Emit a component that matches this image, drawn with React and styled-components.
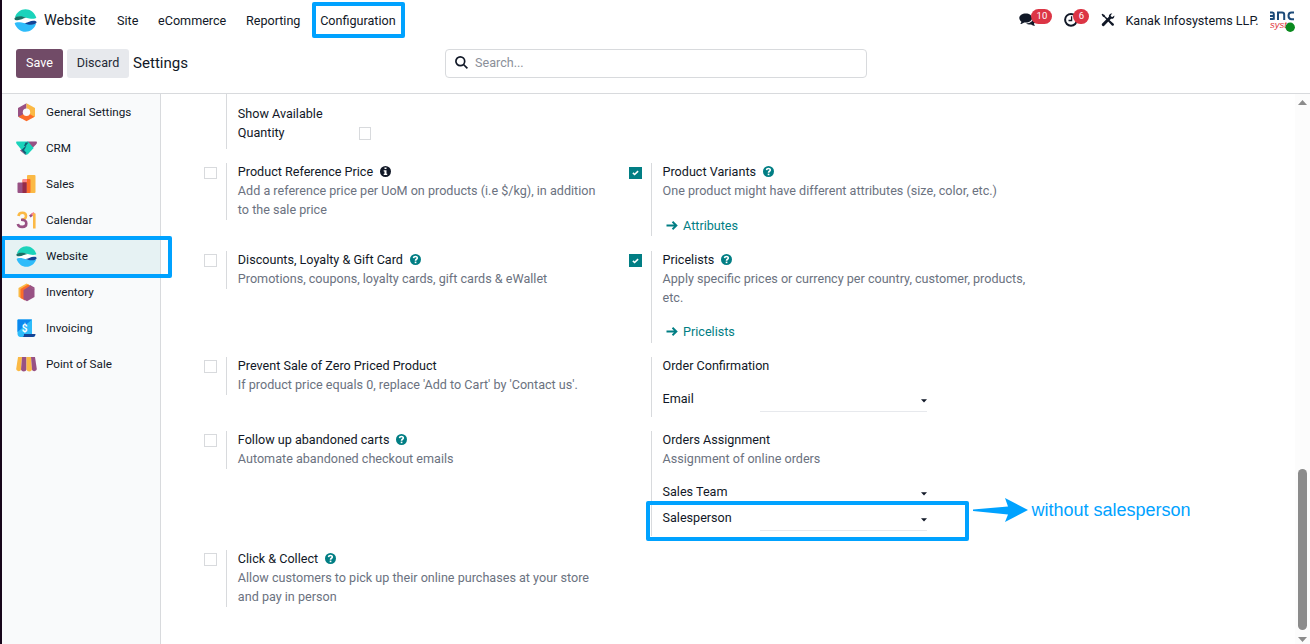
import React from "react";
import styled, { createGlobalStyle, css } from "styled-components";

const Global = createGlobalStyle`
  *, *::before, *::after { box-sizing: border-box; }
  body { margin: 0; background: #fff; overflow: hidden; }
  body, button, input { font-family: Roboto, "Liberation Sans", sans-serif; }
`;

const ink = "#111827";
const muted = "#6b7280";
const teal = "#017e84";
const line = "#d8dadd";
const mark = "#00a2ff";

const Page = styled.div`
  position: relative;
  display: flex;
  flex-direction: column;
  height: 644px;
  width: 1310px;
  border-left: 2px solid #17061a;
  overflow: hidden;
  color: ${ink};
  font-size: 12.6px;
  line-height: 19px;
`;

const Navbar = styled.header`
  display: flex;
  align-items: center;
  height: 41px;
  flex: none;
  padding: 0 15px 0 12px;
`;
const Brand = styled.div`
  display: flex;
  align-items: center;
  gap: 7px;
  width: 103px;
  font-size: 14.4px;
`;
const Menu = styled.nav`
  display: flex;
  gap: 19.7px;
  flex: 1;
`;
const MenuItem = styled.a`
  color: ${ink};
  white-space: nowrap;
`;
const Tray = styled.div`
  display: flex;
  align-items: center;
`;
const TrayIcon = styled.div`
  position: relative;
  width: ${(p) => p.$w}px;
  height: 20px;
  padding-top: ${(p) => p.$pad || 0}px;
  svg { display: block; }
`;
const Badge = styled.span`
  position: absolute;
  left: ${(p) => p.$x}px;
  top: -2px;
  width: ${(p) => p.$w}px;
  height: 15px;
  border-radius: 8px;
  background: #dc3545;
  color: #fff;
  font-size: 9.5px;
  line-height: 14px;
  text-align: center;
`;
const User = styled.span`
  white-space: nowrap;
  width: 144.6px;
`;

const ControlPanel = styled.div`
  display: flex;
  align-items: center;
  height: 53px;
  flex: none;
  padding: 0 14px 7px;
  border-bottom: 1px solid ${line};
`;
const Button = styled.button`
  height: 29px;
  width: ${(p) => p.$w}px;
  padding: 0 0 2px;
  margin-right: 4px;
  border: 0;
  border-radius: 3px;
  font-size: 12.6px;
  background: ${(p) => (p.$primary ? "#714b67" : "#e7e9ed")};
  color: ${(p) => (p.$primary ? "#fff" : "#1f2937")};
`;
const Title = styled.h1`
  margin: 0;
  width: 312px;
  font-size: 15.1px;
  font-weight: 400;
`;
const Search = styled.div`
  display: flex;
  align-items: center;
  gap: 7px;
  width: 422px;
  height: 29px;
  padding: 0 9px 2px;
  border: 1px solid ${line};
  border-radius: 4px;
  color: #8b8f99;
`;

const Body = styled.div`
  display: flex;
  flex: 1;
  min-height: 0;
`;
const Sidebar = styled.aside`
  width: 159px;
  flex: none;
  background: #f9fafb;
  border-right: 1px solid ${line};
`;
const Tab = styled.div`
  display: flex;
  align-items: center;
  gap: 9px;
  height: 36px;
  padding-left: 14px;
  font-size: 11.7px;
  background: ${(p) => (p.$active ? "#e6f2f3" : "transparent")};
  svg { flex: none; }
`;
const TabName = styled.span`
  padding-top: 1px;
`;
const Content = styled.main`
  flex: 1;
  display: flex;
  flex-direction: column;
  gap: 14px;
  padding-left: 43px;
`;
const SettingRow = styled.section`
  display: grid;
  grid-template-columns: 424.7px 425px;
  align-items: start;
  height: ${(p) => p.$h}px;
  flex: none;
`;
const Setting = styled.div`
  display: flex;
`;
const CheckCell = styled.div`
  width: 22px;
  padding-top: ${(p) => (p.$low ? 4 : 3)}px;
`;
const Box = styled.span`
  display: flex;
  align-items: center;
  justify-content: center;
  width: ${(p) => p.$w || 13}px;
  height: ${(p) => p.$h || 13}px;
  border: 1px solid ${line};
  ${(p) => p.$on && css`background: ${teal}; border-color: ${teal};`}
`;
const Pane = styled.div`
  width: 393px;
  min-height: ${(p) => p.$h || 0}px;
  padding-left: 10.85px;
  border-left: 1px solid ${line};
`;
const Label = styled.div`
  display: flex;
  align-items: center;
  gap: 7px;
  height: 18px;
  padding-bottom: 1px;
  white-space: nowrap;
`;
const Help = styled.div`
  color: ${muted};
  white-space: pre;
  ${(p) => p.$lines && css`height: ${p.$lines * 19 + 1}px;`}
`;
const Link = styled.a`
  display: flex;
  align-items: center;
  gap: 5.500px;
  height: 19px;
  margin: 15px 0 0 3px;
  color: ${teal};
`;
const Field = styled.div`
  display: flex;
  margin-top: ${(p) => p.$mt}px;
  height: 23px;
`;
const FieldLabel = styled.span`
  width: 97.4px;
`;
const Select = styled.span`
  display: flex;
  justify-content: flex-end;
  width: 167px;
  padding-top: 10px;
  border-bottom: 1px solid ${(p) => (p.$plain ? "transparent" : "#e7e9ed")};
`;
const Quantity = styled.div`
  display: flex;
  align-items: flex-end;
  justify-content: space-between;
  width: 133.15px;
  padding-top: 10px;
`;
const QuantityCheck = styled.span`
  padding-bottom: 2px;
`;

const Scrollbar = styled.div`
  display: flex;
  flex-direction: column;
  align-items: center;
  justify-content: space-between;
  width: 15px;
  padding: 6px 0 2px;
  background: #fcfcfc;
`;
const Thumb = styled.div`
  width: 9px;
  height: 161px;
  margin-top: auto;
  margin-bottom: 7px;
  border-radius: 5px;
  background: #8b8b8b;
`;

const Outline = styled.div`
  position: absolute;
  left: ${(p) => p.$x - 2}px;
  top: ${(p) => p.$y}px;
  width: ${(p) => p.$w}px;
  height: ${(p) => p.$h}px;
  border: 4px solid ${mark};
  border-radius: 2px;
`;
const Note = styled.div`
  position: absolute;
  left: 971px;
  top: 497px;
  display: flex;
  align-items: center;
  gap: 3.500px;
  color: ${mark};
  font: 18px/26px "Liberation Sans", Arial, sans-serif;
  white-space: nowrap;
`;

const WebsiteIcon = ({ size }) => (
  <svg width={size} height={size} viewBox="0 0 24 24">
    <path d="M2 12.500C6 9.500 18 8 22.500 11c-3 4.500-15 5-20.500 1.500z" fill="#fff" />
    {[["#1bd3bb", "#1a6f65", 0], ["#2ebcfa", "#144496", 180]].map(([light, dark, angle]) => (
      <g key={angle} transform={`rotate(${angle} 12 12)`}>
        <path d="M.9 8.800C2.500 3.600 7 .2 12 .2S21.600 3.700 23.300 9.200c-1.300 1.200-4.300 1.300-7.300.6C11.500 8.800 6 7 .9 8.800z" fill={light} />
        <path d="M.4 9.800C1.300 8.300 3.500 7.600 6 7.600c2.500 0 4.500.6 6.800 1.600C9 9.700 7.200 11.700 3.800 11.700 1.500 11.700.3 11.200.4 9.800z" fill={dark} />
      </g>
    ))}
  </svg>
);

const GeneralIcon = () => (
  <svg width="21" height="21" viewBox="0 0 21 21">
    <path d="M10.500 1.300 2 6v8.500l3.500 2L10.500 7z" fill="#985184" />
    <path d="M10.500 1.300 19 6v8.500l-3.500 2L10.500 7z" fill="#fbb945" />
    <path d="m2.500 14.700 5-2.700h6l5 2.700-8 4.600z" fill="#fc6c2a" />
    <circle cx="10.500" cy="10.200" r="3.700" fill="#f9fafb" />
  </svg>
);
const CrmIcon = () => (
  <svg width="21" height="21" viewBox="0 0 21 21">
    <path d="M11 3.500h9.500c.8.700.4 2-.5 3L16.500 10z" fill="#985184" />
    <path d="M4 12.500 6.500 10l5 5-2 2z" fill="#985184" />
    <path d="M.5 3.500H12l5.500 6.500-5.500 6c-1 1-2 1-3 0L.7 6C0 5 0 4 .5 3.500z" fill="#1bd3bb" />
    <path d="M9.500 4.500h3L9.500 8 8 8z" fill="#145c75" />
    <path d="m5.500 12 4.500-4.500 1.500 1.500-3.500 3 2.500 3-1.500 1z" fill="#145c75" />
    <path d="m10 8.500 3-3 4.500 4.500-5.500 5.500-3.500-3.500z" fill="#1bd3bb" />
  </svg>
);
const SalesIcon = () => (
  <svg width="21" height="21" viewBox="0 0 21 21">
    <rect x="11" y="1" width="8.500" height="18" rx="1" fill="#fbb945" />
    <rect x="6.500" y="5" width="8" height="14" rx="1" fill="#fc6c2a" />
    <path d="M7 5h4v3H6.500z" fill="#fc868b" />
    <rect x="1.500" y="8.500" width="9" height="10.500" rx="1" fill="#985184" />
    <rect x="6.500" y="8.500" width="4" height="10.500" fill="#962b48" />
  </svg>
);
const CalendarIcon = () => (
  <svg width="21" height="21" viewBox="0 0 21 21" fill="none" strokeWidth="2.600">
    <path d="M2.500 6C3 1.600 10 1.600 10 6c0 2.300-1.500 3.500-4 3.500" stroke="#fbb945" />
    <path d="M5 9.800c3.500 0 5.300 1.300 5.300 3.600 0 4.500-7.600 4.500-8.500.6" stroke="#985184" />
    <path d="m13.800 6.500 3-2.200" stroke="#985184" />
    <path d="m15.800 5 2.500-2" stroke="#fc868b" />
    <path d="M18.300 3.500v15" stroke="#fbb945" />
  </svg>
);
const InventoryIcon = () => (
  <svg width="21" height="21" viewBox="0 0 21 21">
    <path d="m10.500 1.500 3 1.500-7 14-4-2.300V6z" fill="#fbb945" />
    <path d="m12 2.500 4 2-7 14L4.500 16V7z" fill="#fc6c2a" />
    <path d="m13 4.500 5.500 2.500v8L11 19.300l-3.500-2V8z" fill="#985184" />
    <path d="m14 3 4.500 2.500v2L13 4.500z" fill="#985184" />
  </svg>
);
const InvoicingIcon = () => (
  <svg width="21" height="21" viewBox="0 0 21 21">
    <path d="M2 1.500h14v15.500l3 2H4.500C2.500 19 1.500 17.500 1.500 15.500V2z" fill="#2ebcfa" />
    <path d="M2 1.500h14L1.500 14V2z" fill="#0b87ee" />
    <path d="M8 16h11.500c0 2-1 3-3 3H6.500C8 18.500 8 17.500 8 16z" fill="#144496" />
    <text x="5.800" y="13.500" fontSize="10" fontWeight="700" fill="#fff">$</text>
  </svg>
);
const PosIcon = () => (
  <svg width="21" height="21" viewBox="0 0 21 21">
    <path d="M2 3h4L5 15.500c-.5 2.500-4.500 2-4.800-.5z" fill="#fbb945" />
    <path d="M6 3h4.500v12.500c-.5 2.500-5 2.500-5.500 0z" fill="#985184" />
    <path d="M10.500 3H15l1 12.500c-.5 2.500-5 2.500-5.500 0z" fill="#fbb945" />
    <path d="M15 3h4l1.800 12c-.3 2.500-4.300 3-4.800.5z" fill="#985184" />
  </svg>
);

const CommentsIcon = () => (
  <svg width="18" height="16" viewBox="0 0 18 16" fill={ink}>
    <path d="M6.800 2.600c3.600 0 6.300 2 6.300 4.500s-2.700 4.500-6.300 4.500c-.6 0-1.100 0-1.600-.1-1.200.9-2.500 1.500-4 1.500.7-.7 1.100-1.400 1.200-2.300C1.200 9.900.3 8.600.3 7.100c0-2.500 2.900-4.500 6.500-4.500z" />
    <path d="M14.300 5.800c1.700.8 2.600 2.200 2.600 3.700 0 1.300-.8 2.400-2 3.100.1.800.6 1.500 1.200 2.200-1.500 0-2.900-.5-4-1.300-1.800.3-3.700-.1-5-1 4.500 0 7.800-2.800 7.200-6.700z" />
  </svg>
);
const ClockIcon = () => (
  <svg width="16" height="16" viewBox="0 0 16 16" fill="none" stroke={ink}>
    <circle cx="7" cy="8.800" r="5.900" strokeWidth="2" />
    <path d="M7.600 5.300v4.200H4.500" strokeWidth="1.300" />
  </svg>
);
const ToolsIcon = () => (
  <svg width="14" height="14" viewBox="0 0 14 14" fill={ink}>
    <path d="M1.200.8 3.600 2l.5 1.300 8.600 7.400c1 1-.7 2.800-1.800 1.800L3.300 4.200 2 3.700.600 1.400z" />
    <path d="M13.300 2.400 11.500 4 10 3.600 9.700 2.200 11.300.6C9.500.1 7.500 1.500 7.900 3.800L1 10.800c-1 1.100.9 3.100 2 2.100l7-7.100c2 .4 3.800-1.300 3.300-3.400z" />
  </svg>
);
const CompanyLogo = () => (
  <svg width="25" height="25" viewBox="0 0 25 25">
    <g fill="none" stroke="#1c4a78" strokeWidth="2">
      <path d="M0 4.500h2.500c1 0 1.300.5 1.300 1.500v5.800M0 8h3.500M0 11h3.500" />
      <path d="M8 12V4.500h4c1.500 0 2.200.8 2.200 2.200V12" />
      <path d="M24 4.500h-2.500c-2 0-3 1-3 3.300s1 3.400 3 3.400H24" />
    </g>
    <text x="0" y="19.500" fontSize="9.500" fill="#e03a40" fontFamily="Liberation Sans" fontStyle="italic">syst</text>
    <circle cx="20.200" cy="19.300" r="4.700" fill="#0a8a1e" />
  </svg>
);
const RoundIcon = ({ info }) => (
  <svg width="11" height="11" viewBox="0 0 11 11">
    <circle cx="5.500" cy="5.500" r="5.500" fill={info ? ink : teal} />
    {info ? (
      <path d="M4.500 1.500h2v1.600h-2zM3.700 4.200h2.800v3.600h.7V9H3.700V7.800h.8V5.400h-.8z" fill="#fff" />
    ) : (
      <g fill="none" stroke="#fff" strokeWidth="1.600">
        <path d="M3.500 4.100C3.700 2 7.300 2 7.300 4c0 1.300-1.800 1.200-1.800 2.700" />
        <path d="M4.700 8.400h1.700" />
      </g>
    )}
  </svg>
);
const Arrow = () => (
  <svg width="12" height="11" viewBox="0 0 12 11" fill="none" stroke={teal} strokeWidth="1.900">
    <path d="M.5 5.500H10.500M6.500 1.700l3.900 3.800-3.900 3.800" />
  </svg>
);
const Caret = () => (
  <svg width="6" height="4" viewBox="0 0 6 4"><path d="M0 .3h6L3 3.400z" fill={ink} /></svg>
);
const Check = ({ on, w, h }) => (
  <Box $on={on} $w={w} $h={h}>
    {on && (
      <svg width="7" height="6" viewBox="0 0 7 6" fill="none" stroke="#fff" strokeWidth="1.600">
        <path d="m.9 2.900 1.700 1.600L6.100 1.100" />
      </svg>
    )}
  </Box>
);

const tabs = [
  ["General Settings", GeneralIcon],
  ["CRM", CrmIcon],
  ["Sales", SalesIcon],
  ["Calendar", CalendarIcon],
  ["Website", WebsiteIcon],
  ["Inventory", InventoryIcon],
  ["Invoicing", InvoicingIcon],
  ["Point of Sale", PosIcon],
];

function Option({ label, help, icon, check, low, link, height, children }) {
  return (
    <Setting>
      <CheckCell $low={low}>
        {check !== undefined && <Check on={check} h={low ? 12 : 13} />}
      </CheckCell>
      <Pane $h={height}>
        <Label>
          {label}
          {icon && <RoundIcon info={icon === "info"} />}
        </Label>
        {help && <Help $lines={low || children ? help.split("\n").length : 0}>{help}</Help>}
        {link && <Link><Arrow />{link}</Link>}
        {children}
      </Pane>
    </Setting>
  );
}

export default function App() {
  return (
    <Page>
      <Global />
      <Navbar>
        <Brand><WebsiteIcon size={23} />Website</Brand>
        <Menu>
          <MenuItem>Site</MenuItem>
          <MenuItem>eCommerce</MenuItem>
          <MenuItem>Reporting</MenuItem>
          <MenuItem>Configuration</MenuItem>
        </Menu>
        <Tray>
          <TrayIcon $w={45}><CommentsIcon /><Badge $x={12} $w={21}>10</Badge></TrayIcon>
          <TrayIcon $w={37}><ClockIcon /><Badge $x={9} $w={16}>6</Badge></TrayIcon>
          <TrayIcon $w={24} $pad={2}><ToolsIcon /></TrayIcon>
          <User>Kanak Infosystems LLP.</User>
          <CompanyLogo />
        </Tray>
      </Navbar>
      <ControlPanel>
        <Button $primary $w={47}>Save</Button>
        <Button $w={62}>Discard</Button>
        <Title>Settings</Title>
        <Search>
          <svg width="13" height="13" viewBox="0 0 13 13" fill="none" stroke={ink} strokeWidth="1.700">
            <circle cx="5.300" cy="5.300" r="4.400" />
            <path d="m8.500 8.500 3.900 3.900" />
          </svg>
          Search...
        </Search>
      </ControlPanel>
      <Body>
        <Sidebar>
          {tabs.map(([name, Icon]) => (
            <Tab key={name} $active={name === "Website"}>
              <Icon size={21} />
              <TabName>{name}</TabName>
            </Tab>
          ))}
        </Sidebar>
        <Content>
          <SettingRow $h={55}>
            <Setting>
              <CheckCell />
              <Pane $h={55}>
                <Quantity>
                  <span>Show Available<br />Quantity</span>
                  <QuantityCheck><Check w={12} /></QuantityCheck>
                </Quantity>
              </Pane>
            </Setting>
          </SettingRow>
          <SettingRow $h={74}>
            <Option low height={57} check={false} icon="info" label="Product Reference Price" help={"Add a reference price per UoM on products (i.e $/kg), in addition\nto the sale price"} />
            <Option low check icon="help" height={73} label="Product Variants" help="One product might have different attributes (size, color, etc.)" link="Attributes" />
          </SettingRow>
          <SettingRow $h={92}>
            <Option height={38} check={false} icon="help" label="Discounts, Loyalty & Gift Card" help="Promotions, coupons, loyalty cards, gift cards & eWallet" />
            <Option check icon="help" height={92} label="Pricelists" help={"Apply specific prices or currency per country, customer, products,\netc."} link="Pricelists" />
          </SettingRow>
          <SettingRow $h={60}>
            <Option height={38} check={false} label="Prevent Sale of Zero Priced Product" help="If product price equals 0, replace 'Add to Cart' by 'Contact us'." />
            <Option height={60} label="Order Confirmation">
              <Field $mt={14}><FieldLabel>Email</FieldLabel><Select><Caret /></Select></Field>
            </Option>
          </SettingRow>
          <SettingRow $h={105}>
            <Option height={38} check={false} icon="help" label="Follow up abandoned carts" help="Automate abandoned checkout emails" />
            <Option height={105} label="Orders Assignment" help="Assignment of online orders">
              <Field $mt={13}><FieldLabel>Sales Team</FieldLabel><Select $plain><Caret /></Select></Field>
              <Field $mt={3}><FieldLabel>Salesperson</FieldLabel><Select><Caret /></Select></Field>
            </Option>
          </SettingRow>
          <SettingRow $h={57}>
            <Option height={57} check={false} icon="help" label="Click & Collect" help={"Allow customers to pick up their online purchases at your store\nand pay in person"} />
          </SettingRow>
        </Content>
        <Scrollbar>
          <svg width="9" height="5" viewBox="0 0 9 5"><path d="M0 5h9L4.500 0z" fill="#8b8b8b" /></svg>
          <Thumb />
          <svg width="9" height="5" viewBox="0 0 9 5"><path d="M0 0h9L4.500 5z" fill="#8b8b8b" /></svg>
        </Scrollbar>
      </Body>
      <Outline $x={312} $y={2} $w={93} $h={36} />
      <Outline $x={1} $y={236} $w={171} $h={42} />
      <Outline $x={646} $y={501} $w={323} $h={40} />
      <Note>
        <svg width="55" height="24" viewBox="0 0 55 24"><path d="M0 11.500 35 8.500 32 0l23 12-23 12 3-7.500L0 13z" fill={mark} /></svg>
        without salesperson
      </Note>
    </Page>
  );
}
